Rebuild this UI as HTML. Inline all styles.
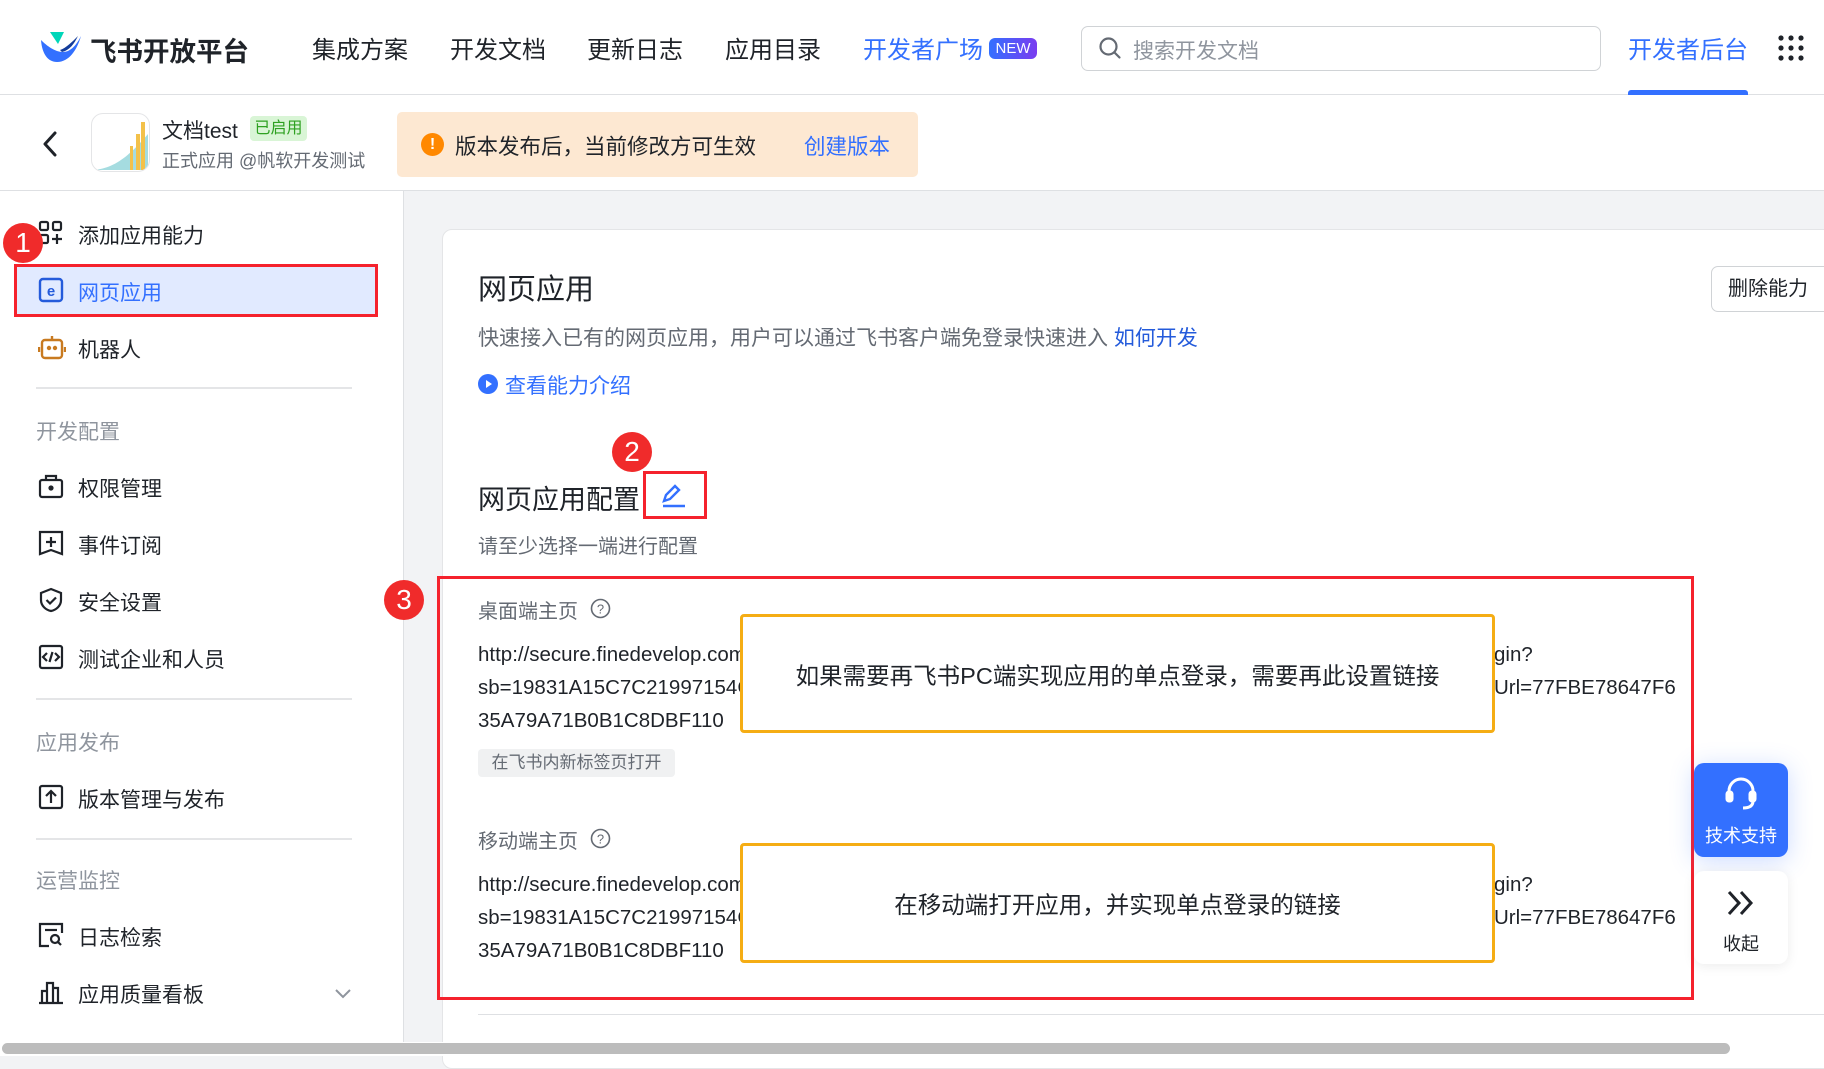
<!DOCTYPE html>
<html><head><meta charset="utf-8"><style>
*{box-sizing:border-box;margin:0;padding:0}
body{width:1824px;height:1056px;overflow:hidden;background:#f2f3f5;font-family:"Liberation Sans","Noto Sans CJK SC",sans-serif;color:#1f2329;position:relative}
.a{position:absolute;white-space:nowrap}
.hdr{position:absolute;left:0;top:0;width:1824px;height:95px;background:#fff;border-bottom:1px solid #dee0e3}
.nav{font-size:24px;color:#1f2329;top:30px}
.bar{position:absolute;left:0;top:95px;width:1824px;height:96px;background:#fff;border-bottom:1px solid #dee0e3}
.side{position:absolute;left:0;top:191px;width:404px;height:865px;background:#fff;border-right:1px solid #dee0e3}
.si{font-size:21px;color:#1f2329;left:78px}
.sg{font-size:21px;color:#8f959e;left:36px}
.dv{position:absolute;left:36px;width:316px;height:2px;background:#e4e5e7}
.ic{position:absolute;left:38px}
.badge{position:absolute;width:40px;height:40px;border-radius:50%;background:#f02b2b;color:#fff;font-size:28px;text-align:center;line-height:40px}
.card{position:absolute;left:442px;top:229px;width:1400px;height:840px;background:#fff;border:1px solid #e4e5e7;border-radius:10px}
.url{font-size:20.5px;color:#1f2329;left:478px}
.ob{position:absolute;left:740px;width:755px;border:3px solid #f5ad14;border-radius:4px;background:#fff;font-size:23.5px;display:flex;align-items:center;justify-content:center;color:#1f2329}
</style></head><body>
<div class="hdr"></div>
<svg class="a" style="left:40px;top:30px" width="42" height="34" viewBox="0 0 42 34"><path d="M10 2h14l-6 12z" fill="#00d6b9"/><path d="M1 10c6 6 14 12 22 12 8 0 14-8 18-16-4 14-12 26-24 26C8 32 2 24 1 10z" fill="#3370ff"/><path d="M20 20c6-2 12-8 18-14-4 8-8 14-16 16z" fill="#133c9a"/></svg>
<div class="a" style="left:90px;top:30px;font-size:26.5px;font-weight:bold;color:#1f2329">飞书开放平台</div>
<div class="a nav" style="left:312px">集成方案</div>
<div class="a nav" style="left:450px">开发文档</div>
<div class="a nav" style="left:587px">更新日志</div>
<div class="a nav" style="left:725px">应用目录</div>
<div class="a nav" style="left:863px;color:#3370ff">开发者广场</div>
<div class="a" style="left:989px;top:38px;width:48px;height:21px;border-radius:6px;background:linear-gradient(90deg,#3370ff,#7a3cf0);color:#fff;font-size:15px;text-align:center;line-height:21px">NEW</div>
<div class="a" style="left:1081px;top:26px;width:520px;height:45px;border:1px solid #d0d3d6;border-radius:7px"></div>
<svg class="a" style="left:1098px;top:36px" width="24" height="24" viewBox="0 0 24 24"><circle cx="10.5" cy="10.5" r="8" fill="none" stroke="#646a73" stroke-width="2.2"/><path d="M16.5 16.5l5 5" stroke="#646a73" stroke-width="2.2" stroke-linecap="round"/></svg>
<div class="a" style="left:1133px;top:35px;font-size:21px;color:#8f959e">搜索开发文档</div>
<div class="a nav" style="left:1628px;color:#3370ff">开发者后台</div>
<div class="a" style="left:1628px;top:90px;width:120px;height:5px;background:#3370ff;border-radius:3px 3px 0 0"></div>
<svg class="a" style="left:1778px;top:35px" width="26" height="26" viewBox="0 0 26 26" fill="#1f2329"><circle cx="3" cy="3" r="2.6"/><circle cx="13" cy="3" r="2.6"/><circle cx="23" cy="3" r="2.6"/><circle cx="3" cy="13" r="2.6"/><circle cx="13" cy="13" r="2.6"/><circle cx="23" cy="13" r="2.6"/><circle cx="3" cy="23" r="2.6"/><circle cx="13" cy="23" r="2.6"/><circle cx="23" cy="23" r="2.6"/></svg>

<div class="bar"></div>
<svg class="a" style="left:42px;top:131px" width="16" height="26" viewBox="0 0 16 26"><path d="M13 2L3 13l10 11" fill="none" stroke="#1f2329" stroke-width="3" stroke-linecap="round" stroke-linejoin="round"/></svg>
<div class="a" style="left:91px;top:113px;width:59px;height:59px;border:1px solid #e4e5e7;border-radius:12px;background:#fff;overflow:hidden">
<svg width="59" height="59" viewBox="0 0 59 59"><path d="M2 56C20 54 34 46 56 20V56z" fill="#8fd3d8" opacity=".8"/><rect x="44" y="20" width="4" height="36" fill="#f3c14a"/><rect x="49" y="8" width="4" height="48" fill="#f3c14a"/><rect x="38" y="32" width="3" height="24" fill="#f3c14a"/></svg></div>
<div class="a" style="left:162px;top:115px;font-size:21px">文档test</div>
<div class="a" style="left:250px;top:116px;width:57px;height:25px;background:#d9f5d6;border-radius:4px;color:#2ea121;font-size:16px;text-align:center;line-height:25px">已启用</div>
<div class="a" style="left:162px;top:147px;font-size:18px;color:#646a73">正式应用 @帆软开发测试</div>
<div class="a" style="left:397px;top:112px;width:521px;height:65px;background:#fde8d2;border-radius:5px"></div>
<div class="a" style="left:421px;top:133px;width:23px;height:23px;border-radius:50%;background:#ff8800;color:#fff;font-size:16px;font-weight:bold;text-align:center;line-height:23px">!</div>
<div class="a" style="left:455px;top:130px;font-size:21.5px;color:#1f2329">版本发布后，当前修改方可生效</div>
<div class="a" style="left:804px;top:130px;font-size:21.5px;color:#3370ff">创建版本</div>

<div class="side"></div>
<svg class="ic" style="top:220px" width="26" height="26" viewBox="0 0 26 26" fill="none" stroke="#1f2329" stroke-width="2.2"><rect x="2" y="2" width="8" height="8" rx="1.5"/><rect x="15" y="2" width="8" height="8" rx="1.5"/><rect x="2" y="15" width="8" height="8" rx="1.5"/><path d="M19 14v10M14 19h10"/></svg>
<div class="a si" style="top:220px">添加应用能力</div>
<div class="a" style="left:14px;top:264px;width:364px;height:53px;background:#e1eaff;border:3px solid #f5222d"></div>
<svg class="ic" style="top:277px" width="26" height="26" viewBox="0 0 26 26"><rect x="2" y="2" width="22" height="22" rx="3" fill="none" stroke="#245bdb" stroke-width="2.4"/><text x="13" y="19" font-size="15" font-weight="bold" text-anchor="middle" fill="#245bdb" font-family="Liberation Sans">e</text></svg>
<div class="a si" style="top:277px;color:#3370ff">网页应用</div>
<svg class="ic" style="top:333px" width="28" height="28" viewBox="0 0 28 28" fill="none" stroke="#c87a20" stroke-width="2.4"><rect x="4" y="7" width="20" height="18" rx="3"/><path d="M14 7V3M1 14v5M27 14v5"/><circle cx="11" cy="15" r="1" fill="#c87a20"/><circle cx="17" cy="15" r="1" fill="#c87a20"/></svg>
<div class="a si" style="top:334px">机器人</div>
<div class="dv" style="top:387px"></div>
<div class="a sg" style="top:416px">开发配置</div>
<svg class="ic" style="top:473px" width="26" height="26" viewBox="0 0 26 26" fill="none" stroke="#1f2329" stroke-width="2.2"><rect x="2" y="7" width="22" height="17" rx="2"/><path d="M8 7V3h10v4"/><circle cx="13" cy="15" r="1.5" fill="#1f2329"/></svg>
<div class="a si" style="top:473px">权限管理</div>
<svg class="ic" style="top:530px" width="26" height="26" viewBox="0 0 26 26" fill="none" stroke="#1f2329" stroke-width="2.2"><path d="M2 2h22v22l-11-4-11 4z"/><path d="M13 7v10M8 12h10"/></svg>
<div class="a si" style="top:530px">事件订阅</div>
<svg class="ic" style="top:587px" width="26" height="26" viewBox="0 0 26 26" fill="none" stroke="#1f2329" stroke-width="2.2"><path d="M13 2l10 4v7c0 6-5 10-10 11C8 23 3 19 3 13V6z"/><path d="M8.5 13l3.5 3.5 6-6"/></svg>
<div class="a si" style="top:587px">安全设置</div>
<svg class="ic" style="top:644px" width="26" height="26" viewBox="0 0 26 26" fill="none" stroke="#1f2329" stroke-width="2.2"><rect x="2" y="2" width="22" height="22" rx="2"/><path d="M9 9l-4 4 4 4M17 9l4 4-4 4M14.5 8l-3 10"/></svg>
<div class="a si" style="top:644px">测试企业和人员</div>
<div class="dv" style="top:698px"></div>
<div class="a sg" style="top:727px">应用发布</div>
<svg class="ic" style="top:784px" width="26" height="26" viewBox="0 0 26 26" fill="none" stroke="#1f2329" stroke-width="2.2"><rect x="2" y="2" width="22" height="22" rx="2"/><path d="M13 19V8M8 12l5-5 5 5"/></svg>
<div class="a si" style="top:784px">版本管理与发布</div>
<div class="dv" style="top:838px"></div>
<div class="a sg" style="top:865px">运营监控</div>
<svg class="ic" style="top:922px" width="26" height="26" viewBox="0 0 26 26" fill="none" stroke="#1f2329" stroke-width="2.2"><path d="M11 24H2V2h22v9"/><path d="M7 8h12"/><circle cx="17" cy="17" r="4"/><path d="M20 20l3 3"/></svg>
<div class="a si" style="top:922px">日志检索</div>
<svg class="ic" style="top:979px" width="26" height="26" viewBox="0 0 26 26" fill="none" stroke="#1f2329" stroke-width="2.2"><path d="M1 24h24M4 24V12h5v12M9 24V4h6v20M15 24V9h5v15"/></svg>
<div class="a si" style="top:979px">应用质量看板</div>
<svg class="a" style="left:334px;top:988px" width="18" height="12" viewBox="0 0 18 12"><path d="M2 2l7 7 7-7" fill="none" stroke="#8f959e" stroke-width="2"/></svg>
<div class="badge" style="left:3px;top:223px">1</div>

<div class="card"></div>
<div class="a" style="left:478px;top:266px;font-size:29px">网页应用</div>
<div class="a" style="left:1711px;top:266px;width:140px;height:46px;border:1px solid #d0d3d6;border-radius:7px;background:#fff;font-size:20px;line-height:44px;padding-left:16px">删除能力</div>
<div class="a" style="left:478px;top:322px;font-size:21px;color:#646a73">快速接入已有的网页应用，用户可以通过飞书客户端免登录快速进入 <span style="color:#245bdb">如何开发</span></div>
<svg class="a" style="left:478px;top:374px" width="20" height="20" viewBox="0 0 20 20"><circle cx="10" cy="10" r="10" fill="#3370ff"/><path d="M8 6l6 4-6 4z" fill="#fff"/></svg>
<div class="a" style="left:505px;top:370px;font-size:21px;color:#3370ff">查看能力介绍</div>
<div class="a" style="left:478px;top:478px;font-size:27px">网页应用配置</div>
<div class="a" style="left:643px;top:471px;width:64px;height:48px;border:3px solid #f5222d"></div>
<svg class="a" style="left:660px;top:482px" width="26" height="26" viewBox="0 0 26 26" fill="none" stroke="#3370ff" stroke-width="2.4"><path d="M4 19l2-6 9-9 4 4-9 9z"/><path d="M3 24h22"/></svg>
<div class="badge" style="left:612px;top:432px">2</div>
<div class="a" style="left:478px;top:530px;font-size:20px;color:#646a73">请至少选择一端进行配置</div>

<div class="a" style="left:478px;top:595px;font-size:20px;color:#646a73">桌面端主页</div>
<svg class="a" style="left:590px;top:598px" width="21" height="21" viewBox="0 0 21 21"><circle cx="10.5" cy="10.5" r="9" fill="none" stroke="#646a73" stroke-width="1.6"/><text x="10.5" y="15.5" font-size="13" text-anchor="middle" fill="#646a73" font-family="Liberation Sans">?</text></svg>
<div class="a url" style="top:643px">http://secure.finedevelop.com/login</div>
<div class="a url" style="top:676px">sb=19831A15C7C21997154C</div>
<div class="a url" style="top:709px">35A79A71B0B1C8DBF110</div>
<div class="a url" style="left:1480px;top:643px;width:200px;background:#fff;padding-left:14px">gin?</div>
<div class="a url" style="left:1480px;top:676px;width:200px;background:#fff;padding-left:14px">Url=77FBE78647F6</div>
<div class="a" style="left:478px;top:749px;width:197px;height:28px;background:#f0f1f2;border-radius:4px;font-size:17px;color:#646a73;text-align:center;line-height:28px">在飞书内新标签页打开</div>
<div class="ob" style="top:614px;height:119px">如果需要再飞书PC端实现应用的单点登录，需要再此设置链接</div>

<div class="a" style="left:478px;top:825px;font-size:20px;color:#646a73">移动端主页</div>
<svg class="a" style="left:590px;top:828px" width="21" height="21" viewBox="0 0 21 21"><circle cx="10.5" cy="10.5" r="9" fill="none" stroke="#646a73" stroke-width="1.6"/><text x="10.5" y="15.5" font-size="13" text-anchor="middle" fill="#646a73" font-family="Liberation Sans">?</text></svg>
<div class="a url" style="top:873px">http://secure.finedevelop.com/login</div>
<div class="a url" style="top:906px">sb=19831A15C7C21997154C</div>
<div class="a url" style="top:939px">35A79A71B0B1C8DBF110</div>
<div class="a url" style="left:1480px;top:873px;width:200px;background:#fff;padding-left:14px">gin?</div>
<div class="a url" style="left:1480px;top:906px;width:200px;background:#fff;padding-left:14px">Url=77FBE78647F6</div>
<div class="ob" style="top:843px;height:120px">在移动端打开应用，并实现单点登录的链接</div>

<div class="a" style="left:437px;top:576px;width:1257px;height:424px;border:3px solid #f5222d"></div>
<div class="badge" style="left:384px;top:580px">3</div>
<div class="a" style="left:478px;top:1014px;width:1346px;height:1px;background:#dee0e3"></div>

<div class="a" style="left:1694px;top:763px;width:94px;height:94px;background:#3370ff;border-radius:10px;box-shadow:0 4px 24px rgba(51,112,255,.25)"></div>
<svg class="a" style="left:1723px;top:775px" width="36" height="36" viewBox="0 0 36 36" fill="none" stroke="#fff" stroke-width="3"><path d="M6 20v-4a12 12 0 0124 0v4"/><rect x="4" y="17" width="5" height="9" rx="2" fill="#fff"/><rect x="27" y="17" width="5" height="9" rx="2" fill="#fff"/><path d="M30 26c0 5-4 7-10 7"/></svg>
<div class="a" style="left:1694px;top:822px;width:94px;text-align:center;font-size:18px;color:#fff">技术支持</div>
<div class="a" style="left:1694px;top:871px;width:94px;height:93px;background:#fff;border-radius:10px;box-shadow:0 2px 12px rgba(0,0,0,.08)"></div>
<svg class="a" style="left:1725px;top:888px" width="32" height="30" viewBox="0 0 32 30" fill="none" stroke="#1f2329" stroke-width="3"><path d="M4 4l10 11L4 26M16 4l10 11-10 11"/></svg>
<div class="a" style="left:1694px;top:930px;width:94px;text-align:center;font-size:18px;color:#1f2329">收起</div>

<div class="a" style="left:0;top:1042px;width:1824px;height:14px;background:#fff"></div>
<div class="a" style="left:2px;top:1043px;width:1728px;height:11px;background:#bcbcbc;border-radius:6px"></div>
</body></html>
